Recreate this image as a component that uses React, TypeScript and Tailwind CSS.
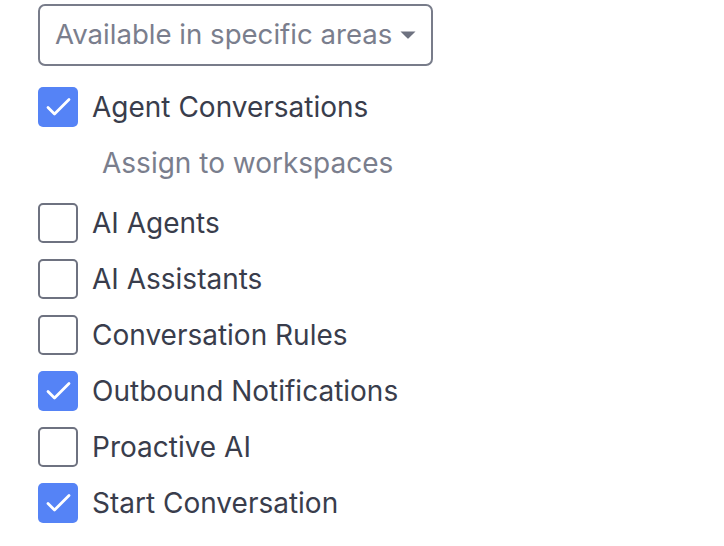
import { useState } from "react";

const items = [
  { label: "AI Agents", checked: false },
  { label: "AI Assistants", checked: false },
  { label: "Conversation Rules", checked: false },
  { label: "Outbound Notifications", checked: true },
  { label: "Proactive AI", checked: false },
  { label: "Start Conversation", checked: true },
];

function Box({ checked }: { checked: boolean }) {
  return checked ? (
    <span className="flex h-10 w-10 shrink-0 rounded-[5px] bg-[#5583f6]">
      <svg width="40" height="40" viewBox="0 0 40 40" fill="none">
        <path
          d="M10 20.5l6.5 6.5L31 12.5"
          stroke="white"
          strokeWidth="2.8"
          strokeLinecap="round"
          strokeLinejoin="round"
        />
      </svg>
    </span>
  ) : (
    <span className="h-10 w-10 shrink-0 rounded-[5px] border-2 border-[#6e7280] bg-white" />
  );
}

function Row({ label, checked }: { label: string; checked: boolean }) {
  return (
    <div className="flex h-10 items-center gap-[14px]">
      <Box checked={checked} />
      <span className="text-[28px] text-[#393d4c]">{label}</span>
    </div>
  );
}

export default function App() {
  const [open] = useState(false);
  return (
    <div
      className="min-h-[546px] w-[724px] bg-white pl-[38px] pt-[4px]"
      style={{ fontFamily: "Inter, 'Liberation Sans', sans-serif" }}
    >
      <button className="flex h-[62px] w-[395px] items-center rounded-[7px] border-2 border-[#787c8a] pl-[15px] pr-[15px]">
        <span className="text-[27.6px] text-[#7a7e8d]">Available in specific areas</span>
        <svg width="16" height="8" viewBox="0 0 16 8" className={"ml-auto " + (open ? "rotate-180" : "")}>
          <path d="M0.5 0.5h15L8.7 7.3a1 1 0 0 1-1.4 0z" fill="#6e7280" />
        </svg>
      </button>
      <div className="mt-[21px]">
        <Row label="Agent Conversations" checked />
        <div className="mb-[4px] flex h-[72px] items-center pl-[64px] text-[28px] text-[#7a7e8d]">
          Assign to workspaces
        </div>
        <div className="flex flex-col gap-4">
          {items.map((it) => (
            <Row key={it.label} label={it.label} checked={it.checked} />
          ))}
        </div>
      </div>
    </div>
  );
}
